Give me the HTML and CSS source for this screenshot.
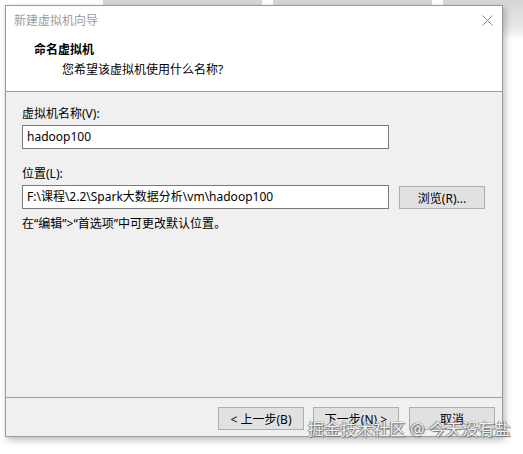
FILE: index.html
```html
<!DOCTYPE html>
<html lang="zh-CN">
<head>
    <meta charset="UTF-8">
    <meta name="viewport" content="width=device-width, initial-scale=1.0">
    <title>新建虚拟机向导</title>
    <link rel="stylesheet" href="styles.css">
</head>
<body>
    <div class="desktop">
        <div class="window">
            <div class="titlebar">
                <span class="title">新建虚拟机向导</span>
                <svg class="close" width="11" height="11" viewBox="0 0 11 11">
                    <path d="M0.5 0.5 L10.5 10.5 M10.5 0.5 L0.5 10.5" stroke="#8a8a8a" stroke-width="1" fill="none"/>
                </svg>
            </div>
            <div class="header">
                <div class="header-title">命名虚拟机</div>
                <div class="header-sub">您希望该虚拟机使用什么名称?</div>
            </div>
            <div class="content">
                <label class="field-label">虚拟机名称(V):</label>
                <div class="row">
                    <div class="input">hadoop100</div>
                </div>
                <label class="field-label second">位置(L):</label>
                <div class="row">
                    <div class="input">F:\课程\2.2\Spark大数据分析\vm\hadoop100</div>
                    <button class="btn browse">浏览(R)...</button>
                </div>
                <p class="hint">在“编辑”&gt;“首选项”中可更改默认位置。</p>
            </div>
            <div class="footer">
                <button class="btn">&lt; 上一步(B)</button>
                <button class="btn">下一步(N) &gt;</button>
                <button class="btn">取消</button>
            </div>
        </div>
        <div class="watermark">掘金技术社区 @ 今天没有盐</div>
    </div>
</body>
</html>
```

FILE: styles.css
```css
body {
    margin: 0;
    background: #ffffff;
    font-family: "Noto Sans", "Noto Sans CJK SC", sans-serif;
    font-size: 12px;
    color: #000;
}
.desktop {
    position: relative;
    width: 523px;
    height: 454px;
    padding: 5px 0 0 5px;
    box-sizing: border-box;
    overflow: hidden;
    background:
        linear-gradient(#d6d6d6, #d6d6d6) 103px 0 / 159px 6px no-repeat,
        linear-gradient(#d6d6d6, #d6d6d6) 273px 0 / 159px 6px no-repeat,
        linear-gradient(#d6d6d6, #e8e8e8 70%, #ffffff) 443px 0 / 80px 40px no-repeat,
        #ffffff;
}
.window {
    width: 498px;
    height: 432px;
    box-sizing: border-box;
    border: 1px solid #9a9a9a;
    background: #f0f0f0;
    display: flex;
    flex-direction: column;
    box-shadow: 2px 3px 7px rgba(0, 0, 0, 0.28);
}
.titlebar {
    height: 27px;
    background: #fff;
    display: flex;
    align-items: center;
    justify-content: space-between;
    padding: 0 9px 0 8px;
}
.title {
    color: #9b9b9b;
    font-size: 12px;
}
.close {
    margin-top: 1px;
}
.header {
    background: #fff;
    height: 59px;
    padding: 9px 0 0 28px;
    box-sizing: border-box;
    border-bottom: 1px solid #a0a0a0;
}
.header-title {
    font-weight: bold;
    line-height: 16px;
}
.header-sub {
    line-height: 16px;
    margin-top: 4px;
    padding-left: 28px;
}
.content {
    flex: 1;
    padding: 14px 0 0 16px;
}
.field-label {
    display: block;
    line-height: 16px;
}
.field-label.second {
    margin-top: 17px;
}
.row {
    display: flex;
    align-items: center;
    margin-top: 3px;
}
.input {
    width: 367px;
    height: 24px;
    box-sizing: border-box;
    border: 1px solid #7a7a7a;
    background: #fff;
    padding-left: 4px;
    line-height: 21px;
    white-space: nowrap;
}
.btn {
    font-family: inherit;
    font-size: 12px;
    color: #000;
    width: 86px;
    height: 23px;
    padding: 0;
    border: 1px solid #adadad;
    background: #e1e1e1;
}
.browse {
    margin-left: 10px;
    margin-top: 1px;
}
.hint {
    margin: 7px 0 0;
    line-height: 16px;
}
.footer {
    height: 39px;
    box-sizing: border-box;
    border-top: 1px solid #a0a0a0;
    display: flex;
    justify-content: flex-end;
    gap: 9px;
    padding: 9px 7px 0 0;
}
.footer .btn:last-child {
    margin-left: 1px;
}
.watermark {
    position: absolute;
    left: 308px;
    top: 419px;
    font-size: 16px;
    line-height: 20px;
    color: #f2f2f2;
    letter-spacing: 0.3px;
    text-shadow: 0 0 1px #555, 1px 1px 1px #777, -1px 0 1px #888;
}
```
